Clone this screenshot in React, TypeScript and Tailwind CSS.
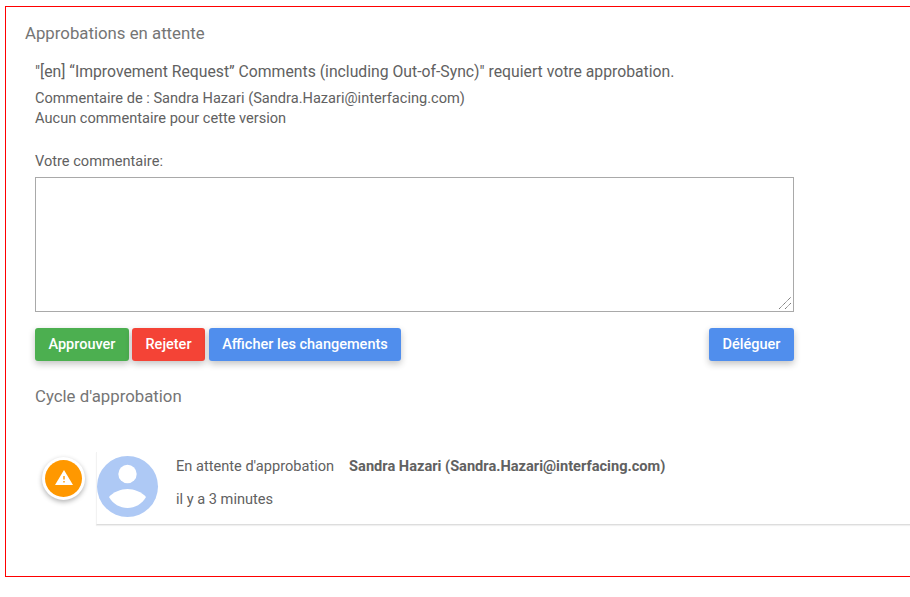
function PersonAvatar() {
  return (
    <svg width="62" height="62" viewBox="0 0 62 62" className="shrink-0">
      <circle cx="30.5" cy="30.5" r="30.5" fill="#aec9f5" />
      <circle cx="30.5" cy="18" r="9.2" fill="#fff" />
      <path d="M12 41C16 36 24 33 30.5 33C37 33 45 36 49 41C45 48 38 52 30.5 52C23 52 16 48 12 41Z" fill="#fff" />
    </svg>
  );
}

function WarningBadge() {
  return (
    <div className="w-[43px] h-[43px] rounded-full bg-white shadow-[0_2px_5px_rgba(0,0,0,0.3)] flex items-center justify-center shrink-0">
      <div className="w-[37px] h-[37px] rounded-full bg-[#ff9800] flex items-center justify-center">
        <svg width="18" height="15" viewBox="0 0 18 15" className="-mt-[3px]">
          <path d="M9 0 L18 15 L0 15 Z" fill="#fff" />
          <rect x="8.3" y="6" width="1.4" height="3.5" fill="#ff9800" />
          <rect x="8.3" y="11" width="1.4" height="1.5" fill="#ff9800" />
        </svg>
      </div>
    </div>
  );
}

function ActionButton({ label, className }: { label: string; className: string }) {
  return (
    <button className={`h-[33px] rounded-[3px] text-white text-[14.5px] font-medium shadow-[0_3px_7px_rgba(0,0,0,0.24)] ${className}`}>
      {label}
    </button>
  );
}

export default function App() {
  return (
    <div className="w-[910px] h-[597px] overflow-hidden bg-white font-['Roboto',sans-serif] text-[#616161]">
      <div className="ml-[5px] mt-[6px] w-[1000px] h-[571px] border border-[#ff0000] float-left pt-[16px]">
        <h2 className="ml-[19px] text-[16.8px] leading-[20px] text-[#757575]">Approbations en attente</h2>

        <div className="ml-[29px] w-[759px]">
          <p className="mt-[19px] text-[15.75px] leading-[20px] whitespace-nowrap">
            "[en] “Improvement Request” Comments (including Out-of-Sync)" requiert votre approbation.
          </p>
          <p className="mt-[6px] text-[14.6px] leading-[20px] whitespace-nowrap">
            Commentaire de : Sandra Hazari (Sandra.Hazari@interfacing.com)
          </p>
          <p className="text-[14.6px] leading-[20px]">Aucun commentaire pour cette version</p>
          <label className="block mt-[23px] text-[14.6px] leading-[20px]">Votre commentaire:</label>
          <div className="relative mt-[6px] h-[135px]">
            <textarea className="block w-[759px] h-[135px] border border-[#a9a9a9] bg-white outline-none resize-none" />
            {/* resize grip */}
            <svg width="14" height="14" viewBox="0 0 14 14" className="absolute right-[2px] bottom-[2px]">
              <path d="M1 13L13 1M7 13L13 7" stroke="#666" strokeWidth="1" strokeDasharray="1.2 0.6" fill="none" />
            </svg>
          </div>

          <div className="flex mt-[16px]">
            <ActionButton label="Approuver" className="w-[94px] bg-[#4caf50]" />
            <ActionButton label="Rejeter" className="ml-[3px] w-[73px] bg-[#f44336]" />
            <ActionButton label="Afficher les changements" className="ml-[4px] w-[192px] bg-[#508eed]" />
            <ActionButton label="Déléguer" className="ml-auto w-[85px] bg-[#508eed]" />
          </div>

          <h3 className="mt-[25px] text-[16.8px] leading-[20px] text-[#757575]">Cycle d'approbation</h3>
        </div>

        <div className="flex mt-[46px] ml-[36px]">
          <div className="mt-[5px] mr-[12px]">
            <WarningBadge />
          </div>
          <div className="flex-1 flex h-[73px] pt-[4px] border-l border-[#f2f2f2] border-b border-b-[#dddddd] shadow-[0_1px_1px_rgba(0,0,0,0.06)] -ml-px">
            <PersonAvatar />
            <div className="ml-[17px] text-[14.6px] leading-[20px]">
              <div className="whitespace-nowrap">
                En attente d'approbation
                <span className="ml-[15px] font-bold">Sandra Hazari (Sandra.Hazari@interfacing.com)</span>
              </div>
              <div className="mt-[13px]">il y a 3 minutes</div>
            </div>
          </div>
        </div>
      </div>
    </div>
  );
}
